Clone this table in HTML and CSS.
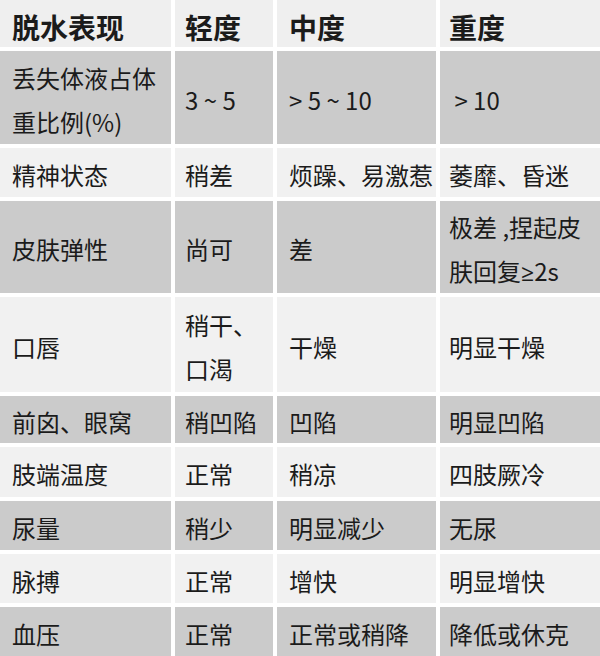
FILE: index.html
```html
<!DOCTYPE html>
<html lang="zh">
<head>
<meta charset="utf-8">
<title>脱水表现</title>
<link rel="stylesheet" href="styles.css">
</head>
<body>
<div class="table">
  <div class="cell head c1">脱水表现</div>
  <div class="cell head c2">轻度</div>
  <div class="cell head c3">中度</div>
  <div class="cell head c4">重度</div>

  <div class="cell dark c1"><span>丢失体液占体<br>重比例(%)</span></div>
  <div class="cell dark c2">3 ~ 5</div>
  <div class="cell dark c3">&gt; 5 ~ 10</div>
  <div class="cell dark c4">&nbsp;&gt; 10</div>

  <div class="cell light c1">精神状态</div>
  <div class="cell light c2">稍差</div>
  <div class="cell light c3">烦躁、易激惹</div>
  <div class="cell light c4">萎靡、昏迷</div>

  <div class="cell dark c1">皮肤弹性</div>
  <div class="cell dark c2">尚可</div>
  <div class="cell dark c3">差</div>
  <div class="cell dark c4"><span>极差 ,捏起皮<br>肤回复<span class="sym">≥</span>2s</span></div>

  <div class="cell light c1">口唇</div>
  <div class="cell light c2"><span>稍干、<br>口渴</span></div>
  <div class="cell light c3">干燥</div>
  <div class="cell light c4">明显干燥</div>

  <div class="cell dark c1">前囟、眼窝</div>
  <div class="cell dark c2">稍凹陷</div>
  <div class="cell dark c3">凹陷</div>
  <div class="cell dark c4">明显凹陷</div>

  <div class="cell light c1">肢端温度</div>
  <div class="cell light c2">正常</div>
  <div class="cell light c3">稍凉</div>
  <div class="cell light c4">四肢厥冷</div>

  <div class="cell dark c1">尿量</div>
  <div class="cell dark c2">稍少</div>
  <div class="cell dark c3">明显减少</div>
  <div class="cell dark c4">无尿</div>

  <div class="cell light c1">脉搏</div>
  <div class="cell light c2">正常</div>
  <div class="cell light c3">增快</div>
  <div class="cell light c4">明显增快</div>

  <div class="cell dark c1">血压</div>
  <div class="cell dark c2">正常</div>
  <div class="cell dark c3">正常或稍降</div>
  <div class="cell dark c4">降低或休克</div>
</div>
</body>
</html>
```

FILE: styles.css
```css
html, body {
  margin: 0;
  padding: 0;
  background: #ffffff;
}

body {
  width: 600px;
  height: 656px;
  overflow: hidden;
  font-family: "Noto Sans CJK SC", "Noto Sans", sans-serif;
  color: #1b1b1b;
}

.table {
  display: grid;
  grid-template-columns: 171px 98px 159px 1fr;
  grid-template-rows: 47px 93px 49px 92px 95px 47px 50px 49px 49px 49px;
  gap: 4px;
  width: 600px;
  height: 656px;
}

.cell {
  display: flex;
  align-items: center;
  font-size: 24px;
  line-height: 44px;
  padding-top: 4px;
  box-sizing: border-box;
  white-space: nowrap;
}

.head {
  background: #efefef;
  font-size: 28px;
  font-weight: 700;
  padding-top: 6px;
}

.dark {
  background: #cbcbcb;
}

.light {
  background: #f1f1f1;
}

.sym {
  font-family: "Open Sans", "DejaVu Sans", sans-serif;
  font-size: 23px;
}

.c1 { padding-left: 12px; }
.c2 { padding-left: 10px; }
.c3 { padding-left: 12px; }
.c4 { padding-left: 9px; }
```
